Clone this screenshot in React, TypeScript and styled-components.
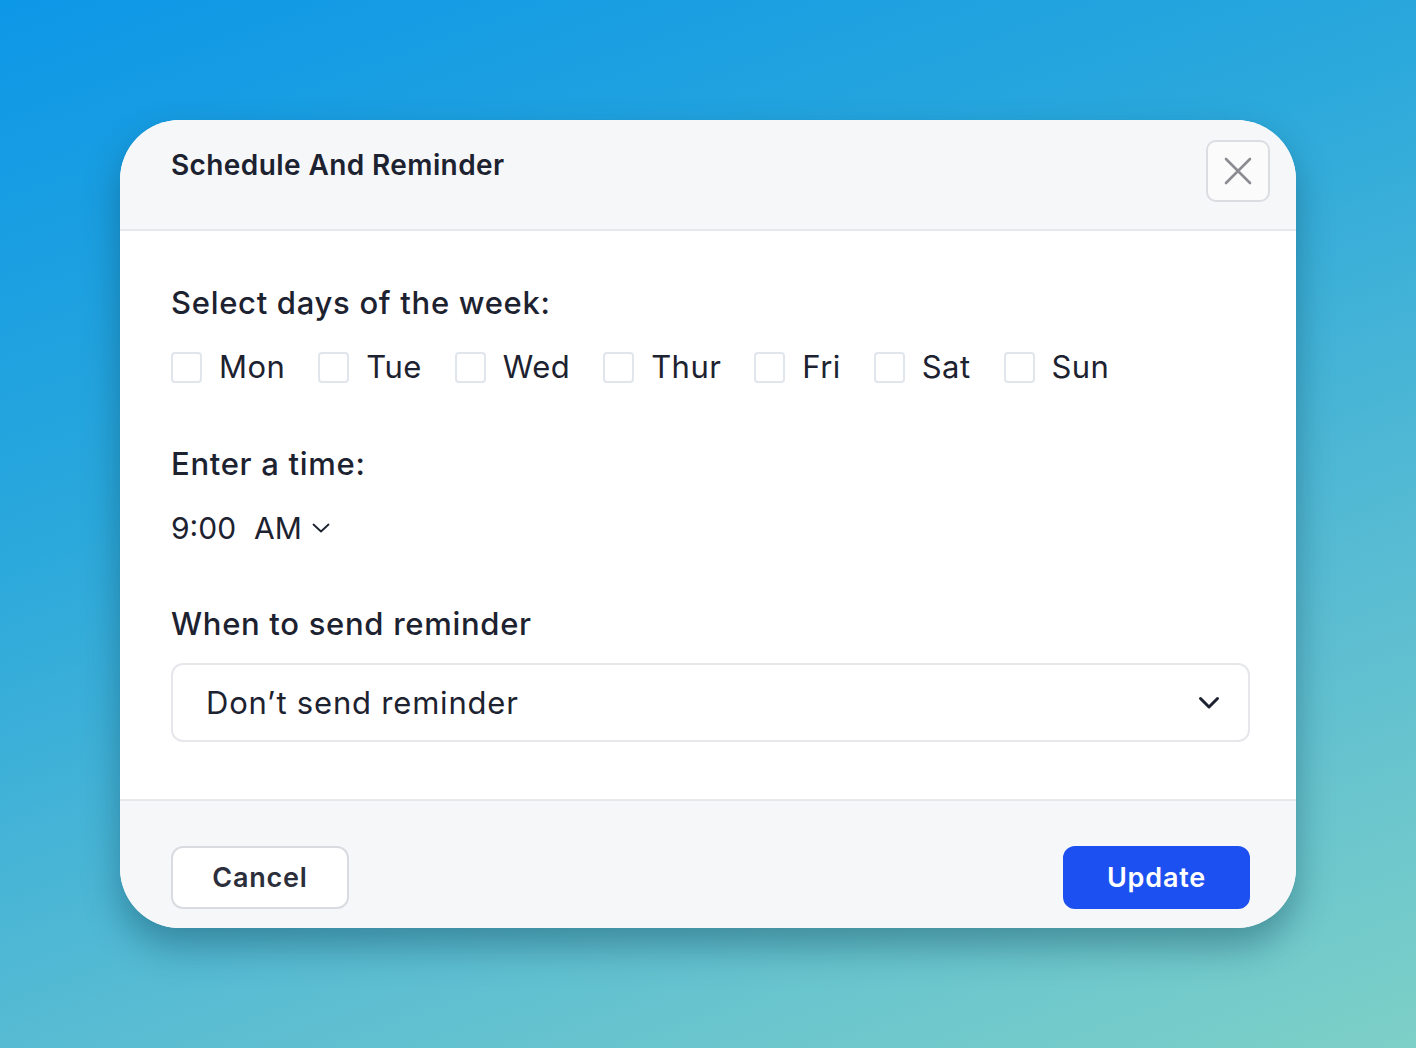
import React, { useState } from 'react'
import styled, { createGlobalStyle } from 'styled-components'

const GlobalStyle = createGlobalStyle`
  html, body {
    margin: 0;
    padding: 0;
  }
  body {
    font-family: Inter, "Noto Sans", sans-serif;
    color: #1d2230;
  }
  * {
    box-sizing: border-box;
  }
`

const DAYS = ['Mon', 'Tue', 'Wed', 'Thur', 'Fri', 'Sat', 'Sun']

const Page = styled.div`
  width: 1416px;
  height: 1048px;
  padding: 120px 120px 0;
  background: linear-gradient(160deg, #0d97e7 0%, #2aa8dc 35%, #5bbdd2 70%, #7dd0c7 100%);
`

const Modal = styled.div`
  width: 1176px;
  height: 808px;
  border-radius: 60px;
  overflow: hidden;
  background: #fff;
  display: flex;
  flex-direction: column;
  box-shadow: 0 18px 36px rgba(10, 60, 80, 0.4);
`

const Header = styled.header`
  height: 111px;
  flex-shrink: 0;
  background: #f6f7f9;
  border-bottom: 2px solid #e6e8ec;
  display: flex;
  justify-content: space-between;
  align-items: flex-start;
  padding: 20px 26px 0 51px;
`

const Title = styled.h1`
  margin: 8px 0 0;
  font-size: 28px;
  font-weight: 600;
  letter-spacing: 0.4px;
`

const CloseButton = styled.button`
  width: 64px;
  height: 62px;
  border: 2px solid #dcdde2;
  border-radius: 10px;
  background: #fbfbfc;
  display: flex;
  align-items: center;
  justify-content: center;
  padding: 0;
  cursor: pointer;
`

const Body = styled.div`
  flex: 1;
  padding: 54px 46px 0 51px;
  display: flex;
  flex-direction: column;
`

const Label = styled.div`
  font-size: 31px;
  font-weight: 500;
  line-height: 36px;
  letter-spacing: 0.7px;
`

const DayRow = styled.div`
  display: flex;
  gap: 33px;
  margin-top: 29px;
`

const Day = styled.label`
  display: flex;
  align-items: center;
  gap: 17px;
  font-size: 31px;
  line-height: 34px;
  font-weight: 400;
  letter-spacing: 0.45px;
  cursor: pointer;
`

const Box = styled.span<{ $checked: boolean }>`
  width: 31px;
  height: 31px;
  border: 2px solid #e1e5ec;
  border-radius: 4px;
  background: ${(p) => (p.$checked ? '#1d50f0' : '#fff')};
`

const Section = styled.div<{ $top: number }>`
  margin-top: ${(p) => p.$top}px;
`

const TimeRow = styled.div`
  display: flex;
  align-items: center;
  gap: 10px;
  margin-top: 28px;
  font-size: 30px;
  line-height: 36px;
  font-weight: 400;
`

const Ampm = styled.span`
  display: flex;
  align-items: center;
  gap: 10px;
  margin-left: 8px;
`

const Select = styled.div`
  margin-top: 21px;
  height: 79px;
  border: 2px solid #e5e7eb;
  border-radius: 12px;
  display: flex;
  align-items: center;
  justify-content: space-between;
  padding: 0 28px 0 33px;
  font-size: 31px;
  font-weight: 400;
  letter-spacing: 0.8px;
`

const Footer = styled.footer`
  height: 129px;
  flex-shrink: 0;
  background: #f6f7f9;
  border-top: 2px solid #e6e8ec;
  display: flex;
  justify-content: space-between;
  align-items: flex-start;
  padding: 45px 46px 0 51px;
`

const Button = styled.button<{ $primary?: boolean }>`
  height: 63px;
  border-radius: 12px;
  font-family: inherit;
  font-size: 27px;
  font-weight: 600;
  letter-spacing: 0.8px;
  cursor: pointer;
  border: 2px solid ${(p) => (p.$primary ? '#1d50f0' : '#dadbe0')};
  background: ${(p) => (p.$primary ? '#1d50f0' : '#fff')};
  color: ${(p) => (p.$primary ? '#fff' : '#2c2f3b')};
  width: ${(p) => (p.$primary ? '187px' : '178px')};
`

export default function App() {
  const [checked, setChecked] = useState<string[]>([])
  const toggle = (d: string) =>
    setChecked((c) => (c.includes(d) ? c.filter((x) => x !== d) : [...c, d]))

  return (
    <Page>
      <GlobalStyle />
      <Modal>
        <Header>
          <Title>Schedule And Reminder</Title>
          <CloseButton aria-label="Close">
            <svg width="28" height="28" viewBox="0 0 28 28" fill="none">
              <path d="M2 2L26 26M26 2L2 26" stroke="#8b8b91" strokeWidth="2.6" strokeLinecap="round" />
            </svg>
          </CloseButton>
        </Header>
        <Body>
          <Label>Select days of the week:</Label>
          <DayRow>
            {DAYS.map((d) => (
              <Day key={d} onClick={() => toggle(d)}>
                <Box $checked={checked.includes(d)} />
                {d}
              </Day>
            ))}
          </DayRow>
          <Section $top={62}>
            <Label>Enter a time:</Label>
            <TimeRow>
              <span>9:00</span>
              <Ampm>
                AM
                <svg width="18" height="10" viewBox="0 0 18 10" fill="none">
                  <path d="M1.5 1.5L9 8.5L16.5 1.5" stroke="#1d2230" strokeWidth="1.8" strokeLinecap="round" strokeLinejoin="round" />
                </svg>
              </Ampm>
            </TimeRow>
          </Section>
          <Section $top={60}>
            <Label>When to send reminder</Label>
            <Select>
              <span>Don’t send reminder</span>
              <svg width="22" height="14" viewBox="0 0 22 14" fill="none">
                <path d="M2.5 2.5L11 11L19.5 2.5" stroke="#1d2230" strokeWidth="3" strokeLinecap="round" strokeLinejoin="round" />
              </svg>
            </Select>
          </Section>
        </Body>
        <Footer>
          <Button>Cancel</Button>
          <Button $primary>Update</Button>
        </Footer>
      </Modal>
    </Page>
  )
}
